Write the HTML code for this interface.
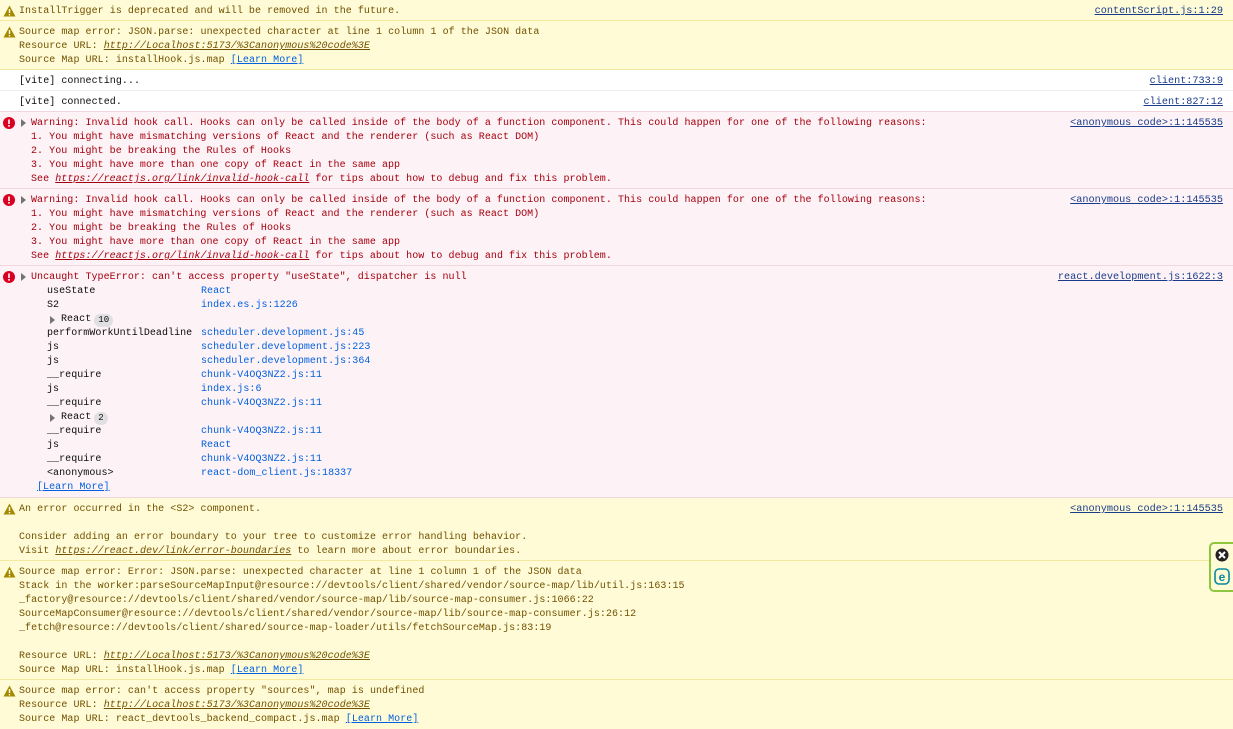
<!DOCTYPE html>
<html><head><meta charset="utf-8"><style>
*{margin:0;padding:0;box-sizing:border-box}
body{width:1233px;height:728px;overflow:hidden;background:#fff;font-family:"Liberation Mono",monospace;font-size:10px;line-height:14px;letter-spacing:0.05px;color:#0c0c0d;position:relative}
.r{position:relative;padding:5px 10px 1px 19px;border-bottom:1px solid #ededf0;white-space:pre}
.w{background:#fffbd6;border-bottom-color:#f5e9a0;color:#715100}
.e{background:#fdf2f5;border-bottom-color:#f3d6dd;color:#a4000f;padding-left:31px}
.src{position:absolute;right:10px;top:5px;color:#1a3b8a;text-decoration:underline;font-size:10.2px;letter-spacing:0}
.u{text-decoration:underline;font-style:italic}
.lm{color:#0060df;text-decoration:underline}
.ic{position:absolute;left:3px;top:5px}
.tw{position:absolute;left:21px;top:7px;width:0;height:0;border-left:5px solid #737373;border-top:4px solid transparent;border-bottom:4px solid transparent}
.st{padding-left:16px;color:#0c0c0d}
.st div{display:flex}
.st .f{width:154px}
.st .l{color:#0060df}
.grp{display:flex;align-items:center}
.grp .t{width:0;height:0;border-left:5px solid #737373;border-top:4px solid transparent;border-bottom:4px solid transparent;margin:0 6px 0 3px}
.badge{background:#e0e0e2;border-radius:7px;padding:0 4px;margin-left:3px;font-size:9px;line-height:13px}
.side{position:absolute;right:0;top:542px;width:24px;height:50px;border:2px solid #8dc63f;border-right:none;border-radius:5px 0 0 5px;background:#fffbd6}
</style></head><body>
<div class="r w" style="height:21px"><svg class="ic" width="13" height="12" viewBox="0 0 13 12"><path d="M6.5 0.5L12.5 11.5H0.5Z" fill="#a58a00"/><rect x="5.8" y="4" width="1.4" height="4" fill="#fff"/><rect x="5.8" y="9" width="1.4" height="1.4" fill="#fff"/></svg>InstallTrigger is deprecated and will be removed in the future.<span class="src">contentScript.js:1:29</span></div>
<div class="r w" style="height:49px"><svg class="ic" width="13" height="12" viewBox="0 0 13 12"><path d="M6.5 0.5L12.5 11.5H0.5Z" fill="#a58a00"/><rect x="5.8" y="4" width="1.4" height="4" fill="#fff"/><rect x="5.8" y="9" width="1.4" height="1.4" fill="#fff"/></svg>Source map error: JSON.parse: unexpected character at line 1 column 1 of the JSON data
Resource URL: <span class="u">http://Localhost:5173/%3Canonymous%20code%3E</span>
Source Map URL: installHook.js.map <span class="lm">[Learn More]</span></div>
<div class="r" style="height:21px">[vite] connecting...<span class="src">client:733:9</span></div>
<div class="r" style="height:21px;border-bottom-color:#f3d6dd">[vite] connected.<span class="src">client:827:12</span></div>
<div class="r e" style="height:77px"><svg class="ic" width="12" height="12" viewBox="0 0 12 12"><circle cx="6" cy="6" r="6" fill="#d70022"/><rect x="5.2" y="2.5" width="1.6" height="4.5" fill="#fff"/><rect x="5.2" y="8" width="1.6" height="1.6" fill="#fff"/></svg><span class="tw"></span>Warning: Invalid hook call. Hooks can only be called inside of the body of a function component. This could happen for one of the following reasons:
1. You might have mismatching versions of React and the renderer (such as React DOM)
2. You might be breaking the Rules of Hooks
3. You might have more than one copy of React in the same app
See <span class="u">https://reactjs.org/link/invalid-hook-call</span> for tips about how to debug and fix this problem.<span class="src">&lt;anonymous code&gt;:1:145535</span></div>
<div class="r e" style="height:77px"><svg class="ic" width="12" height="12" viewBox="0 0 12 12"><circle cx="6" cy="6" r="6" fill="#d70022"/><rect x="5.2" y="2.5" width="1.6" height="4.5" fill="#fff"/><rect x="5.2" y="8" width="1.6" height="1.6" fill="#fff"/></svg><span class="tw"></span>Warning: Invalid hook call. Hooks can only be called inside of the body of a function component. This could happen for one of the following reasons:
1. You might have mismatching versions of React and the renderer (such as React DOM)
2. You might be breaking the Rules of Hooks
3. You might have more than one copy of React in the same app
See <span class="u">https://reactjs.org/link/invalid-hook-call</span> for tips about how to debug and fix this problem.<span class="src">&lt;anonymous code&gt;:1:145535</span></div>
<div class="r e" style="height:232px"><svg class="ic" width="12" height="12" viewBox="0 0 12 12"><circle cx="6" cy="6" r="6" fill="#d70022"/><rect x="5.2" y="2.5" width="1.6" height="4.5" fill="#fff"/><rect x="5.2" y="8" width="1.6" height="1.6" fill="#fff"/></svg><span class="tw"></span>Uncaught TypeError: can't access property "useState", dispatcher is null<span class="src">react.development.js:1622:3</span>
<div class="st"><div><span class="f">useState</span><span class="l">React</span></div><div><span class="f">S2</span><span class="l">index.es.js:1226</span></div><div class="grp"><span class="t"></span>React<span class="badge">10</span></div><div><span class="f">performWorkUntilDeadline</span><span class="l">scheduler.development.js:45</span></div><div><span class="f">js</span><span class="l">scheduler.development.js:223</span></div><div><span class="f">js</span><span class="l">scheduler.development.js:364</span></div><div><span class="f">__require</span><span class="l">chunk-V4OQ3NZ2.js:11</span></div><div><span class="f">js</span><span class="l">index.js:6</span></div><div><span class="f">__require</span><span class="l">chunk-V4OQ3NZ2.js:11</span></div><div class="grp"><span class="t"></span>React<span class="badge">2</span></div><div><span class="f">__require</span><span class="l">chunk-V4OQ3NZ2.js:11</span></div><div><span class="f">js</span><span class="l">React</span></div><div><span class="f">__require</span><span class="l">chunk-V4OQ3NZ2.js:11</span></div><div><span class="f">&lt;anonymous&gt;</span><span class="l">react-dom_client.js:18337</span></div></div><span class="lm" style="margin-left:6px">[Learn More]</span></div>
<div class="r w" style="height:63px"><svg class="ic" width="13" height="12" viewBox="0 0 13 12"><path d="M6.5 0.5L12.5 11.5H0.5Z" fill="#a58a00"/><rect x="5.8" y="4" width="1.4" height="4" fill="#fff"/><rect x="5.8" y="9" width="1.4" height="1.4" fill="#fff"/></svg>An error occurred in the &lt;S2&gt; component.

Consider adding an error boundary to your tree to customize error handling behavior.
Visit <span class="u">https://react.dev/link/error-boundaries</span> to learn more about error boundaries.<span class="src">&lt;anonymous code&gt;:1:145535</span></div>
<div class="r w" style="height:119px"><svg class="ic" width="13" height="12" viewBox="0 0 13 12"><path d="M6.5 0.5L12.5 11.5H0.5Z" fill="#a58a00"/><rect x="5.8" y="4" width="1.4" height="4" fill="#fff"/><rect x="5.8" y="9" width="1.4" height="1.4" fill="#fff"/></svg>Source map error: Error: JSON.parse: unexpected character at line 1 column 1 of the JSON data
Stack in the worker:parseSourceMapInput@resource://devtools/client/shared/vendor/source-map/lib/util.js:163:15
_factory@resource://devtools/client/shared/vendor/source-map/lib/source-map-consumer.js:1066:22
SourceMapConsumer@resource://devtools/client/shared/vendor/source-map/lib/source-map-consumer.js:26:12
_fetch@resource://devtools/client/shared/source-map-loader/utils/fetchSourceMap.js:83:19

Resource URL: <span class="u">http://Localhost:5173/%3Canonymous%20code%3E</span>
Source Map URL: installHook.js.map <span class="lm">[Learn More]</span></div>
<div class="r w" style="height:49px;border-bottom:none"><svg class="ic" width="13" height="12" viewBox="0 0 13 12"><path d="M6.5 0.5L12.5 11.5H0.5Z" fill="#a58a00"/><rect x="5.8" y="4" width="1.4" height="4" fill="#fff"/><rect x="5.8" y="9" width="1.4" height="1.4" fill="#fff"/></svg>Source map error: can't access property "sources", map is undefined
Resource URL: <span class="u">http://Localhost:5173/%3Canonymous%20code%3E</span>
Source Map URL: react_devtools_backend_compact.js.map <span class="lm">[Learn More]</span></div>
<div class="side"><svg width="22" height="46" viewBox="0 0 22 46"><circle cx="11" cy="11" r="6.5" fill="#222"/><path d="M8 8L14 14M14 8L8 14" stroke="#fff" stroke-width="2"/><rect x="4" y="25" width="14" height="15" rx="4" fill="none" stroke="#0a8a9a" stroke-width="1.6"/><text x="11" y="37" font-size="12" font-weight="bold" fill="#0a8a9a" text-anchor="middle" font-family="Liberation Sans,sans-serif">e</text></svg></div>
</body></html>
